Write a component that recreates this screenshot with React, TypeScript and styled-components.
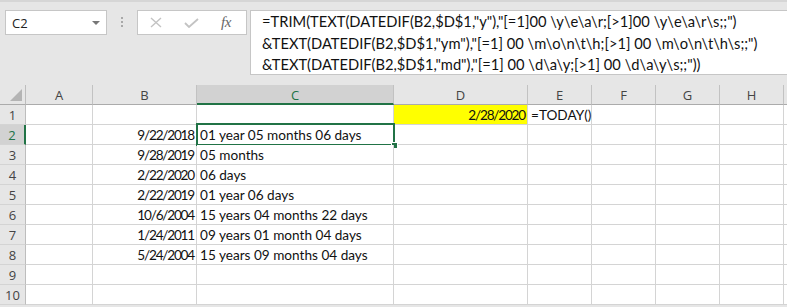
import React from "react";
import styled, { createGlobalStyle, css } from "styled-components";

const GREEN = "#217346";
const CELL_FONT = `Lato, "Liberation Sans", sans-serif`;

const GlobalStyle = createGlobalStyle`
  html, body { margin: 0; padding: 0; background: #e6e6e6; overflow: hidden; }
  #root { width: 787px; height: 307px; }
`;

const Window = styled.div`
  width: 787px;
  height: 307px;
  background: #e6e6e6;
  border-top: 2px solid #d6d6d6;
  box-sizing: border-box;
  overflow: hidden;
  display: flex;
  flex-direction: column;
`;

const FormulaBar = styled.div`
  height: 83px;
  flex: none;
  box-sizing: border-box;
  padding: 8px 0 0 5px;
  display: flex;
  align-items: flex-start;
`;

const NameBox = styled.div`
  width: 102px;
  height: 25px;
  box-sizing: border-box;
  background: #fff;
  border: 1px solid #c6c6c6;
  display: flex;
  align-items: center;
  justify-content: space-between;
  padding: 0 6px 0 6px;
  font-family: "Open Sans", "Noto Sans", sans-serif;
  font-size: 13px;
  color: #222;
`;

const DropArrow = styled.span`
  width: 0;
  height: 0;
  border-left: 4px solid transparent;
  border-right: 4px solid transparent;
  border-top: 4px solid #777;
  margin-top: 1px;
`;

const Grip = styled.div`
  width: 2px;
  margin: 7px 14px 0 14px;
  display: flex;
  flex-direction: column;
  gap: 2px;
`;

const GripDot = styled.span`
  width: 2px;
  height: 2px;
  background: #a8a8a8;
`;

const FxBox = styled.div`
  width: 110px;
  height: 25px;
  box-sizing: border-box;
  background: #fff;
  border: 1px solid #c6c6c6;
  display: flex;
  align-items: center;
  padding-left: 12px;
  gap: 22px;
`;

const FxLabel = styled.span`
  font-family: "Liberation Serif", serif;
  font-style: italic;
  font-size: 15px;
  color: #666;
  letter-spacing: -0.5px;
`;

const FormulaInput = styled.div`
  flex: 1;
  margin-left: 3px;
  height: 65px;
  box-sizing: border-box;
  background: #fff;
  border: 1px solid #c6c6c6;
  border-right: none;
  padding: 0 0 0 11px;
  font-family: ${CELL_FONT};
  font-size: 14.7px;
  line-height: 21.5px;
  color: #111;
  white-space: pre;
`;

const Sheet = styled.div`
  display: grid;
  grid-template-columns: 26px 67px 104px 197px 134px 64px 64px 64px 64px 1fr;
  grid-auto-rows: 20px;
  background: #fff;
`;

const headerBase = css`
  box-sizing: border-box;
  background: #e6e6e6;
  font-family: "Open Sans", "Noto Sans", sans-serif;
  font-size: 13px;
  color: #444;
  display: flex;
  align-items: center;
  justify-content: center;
`;

const Corner = styled.div`
  ${headerBase};
  position: relative;
  border-right: 1px solid #bdbdbd;
  border-bottom: 1px solid #ababab;
`;

const CornerTriangle = styled.span`
  position: absolute;
  right: 3px;
  bottom: 3px;
  width: 0;
  height: 0;
  border-left: 12px solid transparent;
  border-bottom: 12px solid #b4b4b4;
`;

const ColHeader = styled.div<{ $active?: boolean }>`
  ${headerBase};
  border-right: 1px solid #c2c2c2;
  border-bottom: ${(p) => (p.$active ? `2px solid ${GREEN}` : "1px solid #ababab")};
  background: ${(p) => (p.$active ? "#d2d2d2" : "#e6e6e6")};
  color: ${(p) => (p.$active ? GREEN : "#444")};
  padding-top: 1px;
`;

const RowHeader = styled.div<{ $active?: boolean }>`
  ${headerBase};
  border-right: ${(p) => (p.$active ? `2px solid ${GREEN}` : "1px solid #bdbdbd")};
  border-bottom: 1px solid #d4d4d4;
  background: ${(p) => (p.$active ? "#d2d2d2" : "#e6e6e6")};
  color: ${(p) => (p.$active ? GREEN : "#444")};
`;

const Cell = styled.div<{ $align?: "left" | "right"; $fill?: string; $numeric?: boolean }>`
  position: relative;
  box-sizing: border-box;
  border-right: 1px solid #d4d4d4;
  border-bottom: 1px solid #d4d4d4;
  background: ${(p) => p.$fill ?? "#fff"};
  display: flex;
  align-items: center;
  justify-content: ${(p) => (p.$align === "right" ? "flex-end" : "flex-start")};
  padding: 1px 2px 0 3px;
  font-family: ${CELL_FONT};
  font-size: 13.6px;
  letter-spacing: ${(p) => (p.$numeric ? "-1.2px" : "0")};
  color: #111;
  white-space: nowrap;
  overflow: visible;
  z-index: ${(p) => (p.$align === "left" ? 1 : 0)};
`;

const Selection = styled.div`
  position: absolute;
  top: -2px;
  left: -1px;
  right: -2px;
  bottom: -2px;
  border: 2px solid ${GREEN};
  pointer-events: none;
  z-index: 3;
`;

const FillHandle = styled.span`
  position: absolute;
  right: -5px;
  bottom: -5px;
  width: 5px;
  height: 5px;
  background: ${GREEN};
  border: 1px solid #fff;
`;

const cols = ["A", "B", "C", "D", "E", "F", "G", "H", ""];

type RowData = { b?: string; c?: string; d?: string; e?: string };

const rows: RowData[] = [
  { d: "2/28/2020", e: "=TODAY()" },
  { b: "9/22/2018", c: "01 year 05 months 06 days" },
  { b: "9/28/2019", c: "05 months" },
  { b: "2/22/2020", c: "06 days" },
  { b: "2/22/2019", c: "01 year 06 days" },
  { b: "10/6/2004", c: "15 years 04 months 22 days" },
  { b: "1/24/2011", c: "09 years 01 month 04 days" },
  { b: "5/24/2004", c: "15 years 09 months 04 days" },
  {},
  {},
];

const formula = [
  `=TRIM(TEXT(DATEDIF(B2,$D$1,"y"),"[=1]00 \\y\\e\\a\\r;[>1]00 \\y\\e\\a\\r\\s;;")`,
  `&TEXT(DATEDIF(B2,$D$1,"ym"),"[=1] 00 \\m\\o\\n\\t\\h;[>1] 00 \\m\\o\\n\\t\\h\\s;;")`,
  `&TEXT(DATEDIF(B2,$D$1,"md"),"[=1] 00 \\d\\a\\y;[>1] 00 \\d\\a\\y\\s;;"))`,
];

export default function App() {
  return (
    <>
      <GlobalStyle />
      <Window>
        <FormulaBar>
          <NameBox>
            <span>C2</span>
            <DropArrow />
          </NameBox>
          <Grip>
            <GripDot />
            <GripDot />
            <GripDot />
          </Grip>
          <FxBox>
            <svg width="12" height="11" viewBox="0 0 12 11">
              <path d="M1 1 L11 10 M11 1 L1 10" stroke="#c3c3c3" strokeWidth="1.4" fill="none" />
            </svg>
            <svg width="15" height="10" viewBox="0 0 15 10">
              <path d="M1 5 L5 9 L14 1" stroke="#c3c3c3" strokeWidth="1.8" fill="none" />
            </svg>
            <FxLabel>fx</FxLabel>
          </FxBox>
          <FormulaInput>{formula.join("\n")}</FormulaInput>
        </FormulaBar>
        <Sheet>
          <Corner>
            <CornerTriangle />
          </Corner>
          {cols.map((c, i) => (
            <ColHeader key={i} $active={c === "C"}>
              {c}
            </ColHeader>
          ))}
          {rows.map((r, i) => {
            const n = i + 1;
            return (
              <React.Fragment key={n}>
                <RowHeader $active={n === 2}>{n}</RowHeader>
                <Cell />
                <Cell $align="right" $numeric>
                  {r.b}
                </Cell>
                <Cell $align="left">
                  {r.c}
                  {n === 2 && (
                    <Selection>
                      <FillHandle />
                    </Selection>
                  )}
                </Cell>
                <Cell $align="right" $numeric $fill={n === 1 ? "#ffff00" : undefined}>
                  {r.d}
                </Cell>
                <Cell $align="left">{r.e}</Cell>
                <Cell />
                <Cell />
                <Cell />
                <Cell />
              </React.Fragment>
            );
          })}
        </Sheet>
      </Window>
    </>
  );
}
